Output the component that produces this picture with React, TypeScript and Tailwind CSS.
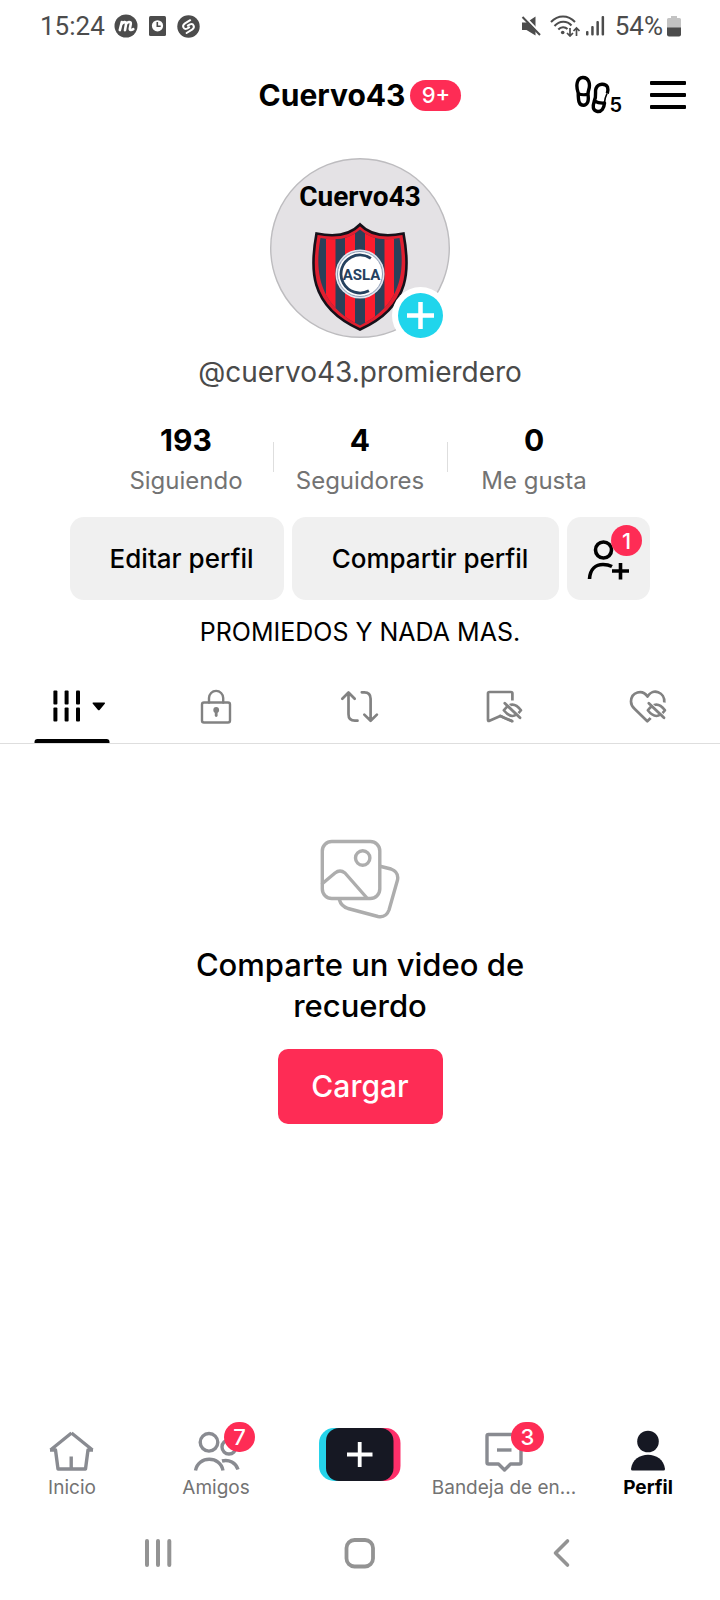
import type { ReactNode } from "react";

const inter = "font-['Inter','Liberation_Sans',sans-serif]";
const roboto = "font-['Roboto','Liberation_Sans',sans-serif]";

function StatusBar() {
  return (
    <div className={`flex h-[52px] items-center justify-between pl-10 pr-[39px] text-[#4c4c4c] ${roboto}`}>
      <div className="flex items-center">
        <span className="text-[26px] leading-none">15:24</span>
        <svg className="ml-[9px]" width="24" height="24" viewBox="0 0 24 24" aria-hidden="true">
          <circle cx="12" cy="12" r="11.5" fill="#4c4c4c" />
          <path d="M5 16.5 7 8.5M6.8 10.5C8 8.2 11.6 7.6 11.3 10.2L10.2 16.5M11.2 10.5C12.6 8.2 16.2 7.4 16 10.2L15 15.2C14.8 16.6 16.5 16.8 18.5 15.6" transform="translate(.8 -.4)" fill="none" stroke="#fff" strokeWidth="2.6" strokeLinecap="round" />
        </svg>
        <svg className="ml-[11px]" width="17" height="20" viewBox="0 0 17 20" aria-hidden="true">
          <rect width="17" height="20" rx="1.5" fill="#4c4c4c" />
          <circle cx="8.5" cy="9.8" r="5.6" fill="#fff" />
          <path d="M8.3 6v4.2h3.4" fill="none" stroke="#4c4c4c" strokeWidth="1.6" />
        </svg>
        <svg className="ml-[11px]" width="23" height="23" viewBox="0 0 23 23" aria-hidden="true">
          <circle cx="11.5" cy="11.5" r="11.2" fill="#4c4c4c" />
          <path d="M13.2 5.2 8 8.4C4.4 10.8 6.6 15 10 13.6L12.2 12.4M9.6 18 15 14.6C18.6 12.2 16.4 8 13 9.4L10.8 10.6" fill="none" stroke="#fff" strokeWidth="2" strokeLinecap="round" />
        </svg>
      </div>
      <div className="flex items-center">
        <svg width="20" height="20" viewBox="0 0 20 20" aria-hidden="true">
          <path d="M1 6.5h4.5L14.5.5v19L5.5 14H1Z" fill="#4c4c4c" />
          <path d="m3.2 0 17 18" stroke="#fff" strokeWidth="2" />
          <path d="m1.5 1 17.5 18" stroke="#4c4c4c" strokeWidth="2" />
        </svg>
        <svg className="ml-[9px]" width="30" height="22" viewBox="0 0 30 22" fill="none" stroke="#4c4c4c" strokeWidth="2" aria-hidden="true">
          <path d="M1 7C8-.5 18-.5 25 7M4.5 11C9.5 5.3 17 5.3 21.5 10.5M8.3 14.5C11 11.5 15 11.5 17.5 14" />
          <circle cx="12.7" cy="17.5" r="1.8" fill="#4c4c4c" stroke="none" />
          <path d="M20 13v8M17 18l3 3 3-3M26.5 21v-8M23.5 16l3-3 3 3" strokeWidth="1.7" />
        </svg>
        <svg className="ml-[6px]" width="19" height="20" viewBox="0 0 19 20" fill="#4c4c4c" aria-hidden="true">
          <rect x="0" y="15" width="2.5" height="4.5" rx="1" />
          <rect x="5.2" y="10" width="2.5" height="9.5" rx="1" />
          <rect x="10.4" y="5" width="2.5" height="14.5" rx="1" />
          <rect x="15.6" y="0" width="2.5" height="19.5" rx="1" />
        </svg>
        <span className="ml-[10px] text-[26px] leading-none">54%</span>
        <svg className="ml-1" width="14" height="21" viewBox="0 0 14 21" aria-hidden="true">
          <path d="M4 0h6v2h2.5q1.5 0 1.5 1.5V12H0V3.5Q0 2 1.5 2H4Z" fill="#c3c3c3" />
          <path d="M0 11.5h14v7q0 2-2 2H2q-2 0-2-2Z" fill="#4c4c4c" />
        </svg>
      </div>
    </div>
  );
}

function Header() {
  return (
    <header className="relative flex h-[86px] items-center justify-center">
      <div className="flex items-center gap-[5px]">
        <h1 className="text-[30px] leading-none font-bold text-black">Cuervo43</h1>
        <span className="flex h-[31px] w-[51px] items-center justify-center rounded-full bg-[#fe2c55] text-[22px] leading-none font-medium text-white">9+</span>
      </div>
      <div className="absolute right-[34px] flex items-center gap-[28px]">
        <button type="button" aria-label="Visitas al perfil" className="relative flex w-[47px]">
          <svg width="38" height="40" viewBox="0 0 38 40" fill="none" stroke="#000" strokeWidth="3.4" strokeLinejoin="round" aria-hidden="true">
            <path d="M3.2 18C0.5 10 2 2.8 7.8 2.500C13.800 2.300 15.500 9 13.800 14.500Q13 17 13 19.500Q14.500 29.500 8.800 30.300C3.500 30.500 3.300 25 3.200 18Z" />
            <path d="M3.2 18.700Q7.500 20.500 13 19.300" strokeWidth="3" />
            <path d="M19.3 26C22 20 19.500 17 21 13.500C23.500 7.800 30.500 8.500 32.500 12Q33.500 15 32.300 18.500" />
            <path d="M32 18.500Q30 22.500 29.500 27.500" strokeWidth="1.6" />
            <path d="M19.3 26Q24 28.500 29.500 28C29 33.500 26.500 37 22.500 36.500C17.500 35.500 17.500 31.500 19.300 26Z" />
          </svg>
          <span className="absolute right-0 bottom-0 text-[20px] leading-none font-semibold">5</span>
        </button>
        <button type="button" aria-label="Menú" className="flex w-[36px] flex-col gap-2">
          <span className="h-[4px] w-full rounded-[1px] bg-black" />
          <span className="h-[4px] w-full rounded-[1px] bg-black" />
          <span className="h-[4px] w-full rounded-[1px] bg-black" />
        </button>
      </div>
    </header>
  );
}

function Avatar() {
  return (
    <div className="relative mt-5 size-[180px]">
      <svg className="size-full" viewBox="0 0 180 180" role="img" aria-label="Foto de perfil de Cuervo43">
        <defs>
          <clipPath id="shield">
            <path d="M90 71.500Q76 85 50.500 80C45.500 108 45.500 146 90 167.500C134.500 146 134.500 108 129.500 80Q104 85 90 71.500Z" />
          </clipPath>
        </defs>
        <circle cx="90" cy="90" r="89.3" fill="#e4e2e5" stroke="#bdbcbf" strokeWidth="1.4" />
        <text x="90" y="48" textAnchor="middle" fontFamily="Roboto, sans-serif" fontSize="28" fontWeight="700">Cuervo43</text>
        <path d="M90 66.500Q76 81.500 46.500 75.500C40.500 108 37.500 148 90 171.500C142.500 148 139.500 108 133.500 75.500Q104 81.500 90 66.500Z" fill="#e01f30" stroke="#15111a" strokeWidth="2.6" />
        <g clipPath="url(#shield)">
          <rect x="40" y="64" width="100" height="110" fill="#2b4059" />
          <g fill="#fb1c2d">
            <rect x="56" y="64" width="9.5" height="110" />
            <rect x="75" y="64" width="10" height="110" />
            <rect x="95" y="64" width="10" height="110" />
            <rect x="114.5" y="64" width="9.5" height="110" />
          </g>
        </g>
        <circle cx="90" cy="116" r="24.5" fill="#dfe5ef" />
        <circle cx="90" cy="116" r="22.5" fill="#fff" stroke="#8c9bb4" strokeWidth="1" />
        <circle cx="90" cy="116" r="19" fill="none" stroke="#25415f" strokeWidth="2.8" strokeDasharray="80 100" transform="rotate(62 90 116)" />
        <text x="91.5" y="121.5" fill="#25415f" fontFamily="Roboto, sans-serif" fontSize="15" fontWeight="700" textAnchor="middle">ASLA</text>
      </svg>
      <button type="button" aria-label="Agregar foto" className="absolute right-px -bottom-[6px] flex size-[57px] items-center justify-center rounded-full bg-white">
        <svg width="45" height="45" viewBox="0 0 45 45" aria-hidden="true">
          <circle cx="22.5" cy="22.5" r="22.5" fill="#20d5ec" />
          <path d="M9 22.5h27M22.5 9v27" stroke="#fff" strokeWidth="4.5" />
        </svg>
      </button>
    </div>
  );
}

const stats = [
  { value: "193", label: "Siguiendo" },
  { value: "4", label: "Seguidores" },
  { value: "0", label: "Me gusta" },
];

function Stats() {
  return (
    <dl className="mt-8 flex items-center justify-center">
      {stats.map((s, i) => (
        <div key={s.label} className="flex items-center">
          {i > 0 && <span className="mb-2 h-[30px] w-px bg-[#dedede]" />}
          <div className="flex w-[173px] flex-col-reverse items-center gap-[5px]">
            <dt className="text-[24px] leading-9 text-[#737373]">{s.label}</dt>
            <dd className="text-[30px] leading-9 font-bold text-black">{s.value}</dd>
          </div>
        </div>
      ))}
    </dl>
  );
}

function Actions() {
  const base = "h-[83px] flex-auto rounded-[14px] bg-[#f0f0f0] pl-[9px] text-[26px] font-medium text-black";
  return (
    <div className="mt-[18px] flex w-full gap-2 px-[70px]">
      <button type="button" className={base}>Editar perfil</button>
      <button type="button" className={base}>Compartir perfil</button>
      <button type="button" aria-label="Agregar amigos" className="relative h-[83px] w-[83px] shrink-0 rounded-[14px] bg-[#f0f0f0]">
        <svg className="ml-5 mt-1" width="44" height="42" viewBox="0 0 44 42" fill="none" stroke="#000" strokeWidth="3.6" aria-hidden="true">
          <circle cx="16.5" cy="10" r="8" />
          <path d="M2.5 39C3 29 9 24.500 16 24.500Q21 24.500 25 26.500" />
          <path d="M25 31h17M33.500 23v16.500" />
        </svg>
        <span className="absolute top-2 right-2 flex size-[31px] items-center justify-center rounded-full bg-[#fe2c55] text-[22px] leading-none font-medium text-white">1</span>
      </button>
    </div>
  );
}

function HiddenEye() {
  return (
    <>
      <ellipse cx="28.4" cy="24.3" rx="8.6" ry="5.6" fill="#fff" stroke="#fff" strokeWidth="6" />
      <path d="M19.800 24.300Q28.400 13 37 24.300Q28.400 35.600 19.800 24.300Z" strokeWidth="2.600" />
      <path d="M23.500 17.500 34.500 28" stroke="#fff" strokeWidth="1.200" />
      <path d="M20.800 17.200 36 31.800" strokeWidth="2.800" />
    </>
  );
}

function TabIcon({ children }: { children: ReactNode }) {
  return (
    <svg width="40" height="40" viewBox="0 0 40 40" fill="none" stroke="#828282" strokeWidth="2.7" strokeLinecap="round" strokeLinejoin="round" aria-hidden="true">
      {children}
    </svg>
  );
}

function Tabs() {
  const tab = "flex h-full w-1/5 items-center justify-center";
  return (
    <div role="tablist" className="mt-[18px] flex h-[76px] w-full border-b border-[#dedede]">
      <button type="button" role="tab" aria-selected="true" aria-label="Videos" className={`${tab} relative pl-[14px]`}>
        <svg width="53" height="32" viewBox="0 0 53 32" aria-hidden="true">
          {[0.4, 11.6, 23].map((x) => (
            <g key={x}>
              <rect x={x} y="0.5" width="4" height="14" rx="1" />
              <rect x={x} y="17.5" width="4" height="14" rx="1" />
            </g>
          ))}
          <path d="M40 12.500h11.500q1 .3.300 1.200l-5 6q-1 1-2 0l-5-6q-.8-.9.200-1.200Z" />
        </svg>
        <span className="absolute bottom-0 left-1/2 h-1 w-[75px] -translate-x-1/2 rounded-t-[3px] bg-black" />
      </button>
      <button type="button" role="tab" aria-selected="false" aria-label="Privados" className={tab}>
        <TabIcon>
          <rect x="6" y="16.5" width="28" height="20" rx="2" strokeWidth="2.4" />
          <path d="M13 16.500V12a7.100 7.100 0 0 1 14.200 0v4.500" strokeWidth="2.4" />
          <circle cx="20.2" cy="24" r="2.9" fill="#828282" stroke="none" />
          <path d="M20.200 25v4.500" strokeWidth="2.8" />
        </TabIcon>
      </button>
      <button type="button" role="tab" aria-selected="false" aria-label="Republicaciones" className={tab}>
        <TabIcon>
          <path d="M17.500 34.700h-2.500q-6.500 0-6.500-6.500V6.500M2.300 12.700l6.200-6.200 6.200 6.200M21.800 6.300h2.500q6.300 0 6.300 6.500v22M24.300 28.600l6.300 6.200 6.300-6.200" />
        </TabIcon>
      </button>
      <button type="button" role="tab" aria-selected="false" aria-label="Favoritos" className={tab}>
        <TabIcon>
          <path d="M28.400 14.500V7.500q0-1.500-1.500-1.500H5.500Q4 6 4 7.500V34q0 1.500 1.500.7L16.300 30l12 5.200" strokeLinecap="butt" />
          <HiddenEye />
          <path d="M16.300 30l12 5.200" />
        </TabIcon>
      </button>
      <button type="button" role="tab" aria-selected="false" aria-label="Me gusta" className={tab}>
        <TabIcon>
          <path d="M36.300 16.500C37.300 6 24.500 1.500 19.500 10.500C14.500 3 3.300 5.500 3 15.500Q3 19.500 6.500 22.800L19.300 35.300L22.700 32" strokeLinecap="butt" />
          <HiddenEye />
        </TabIcon>
      </button>
    </div>
  );
}

function EmptyState() {
  return (
    <section className="mt-[94px] flex flex-col items-center">
      <svg width="80" height="82" viewBox="0 0 80 82" fill="none" stroke="#adadad" strokeWidth="3.4" strokeLinecap="round" strokeLinejoin="round" aria-hidden="true">
        <rect x="2.3" y="3.5" width="57.5" height="57" rx="9.5" />
        <circle cx="42.7" cy="20" r="7.2" />
        <path d="M2.500 45.500 15 35q5-4 10 0L46.500 59.500" />
        <path d="M61 28.500l10 2.500q8 3 6.500 11l-8.500 30q-3 8-11 6.500L28 70.500q-7-2.500-8.500-8.500" />
      </svg>
      <h2 className="mt-6 max-w-[400px] text-center text-[31px] leading-[41px] font-medium text-black">Comparte un video de recuerdo</h2>
      <button type="button" className="mt-[23px] h-[75px] w-[165px] rounded-[10px] bg-[#fe2c55] text-[30px] font-medium text-white">Cargar</button>
    </section>
  );
}

function NavItem({ label, active, badge, wide, children }: { label: string; active?: boolean; badge?: string; wide?: boolean; children: ReactNode }) {
  return (
    <a href="#" aria-current={active ? "page" : undefined} className="flex min-w-0 flex-1 flex-col items-center">
      <span className="relative">
        <svg width="48" height="48" viewBox="0 0 48 48" fill="none" stroke="#898b91" strokeWidth="3.4" strokeLinejoin="round" aria-hidden="true">
          {children}
        </svg>
        {badge && (
          <span className={`absolute -top-1 flex h-[30px] items-center justify-center rounded-full bg-[#fe2c55] text-[22px] leading-none font-medium text-white ${wide ? "left-[31px] w-[33px]" : "left-8 w-[31px]"}`}>{badge}</span>
        )}
      </span>
      <span className={`mt-0.5 text-[19px] leading-6 whitespace-nowrap ${active ? "font-bold text-black" : "text-[#737373]"}`}>{label}</span>
    </a>
  );
}

function BottomNav() {
  return (
    <nav className="mt-auto flex h-[97px] items-start">
      <NavItem label="Inicio">
        <path d="M23.500 7 44.500 24M23.500 7 2.500 24M2 24H7.500L10 43H37.500L40 24H45M23.200 43V30.500" />
      </NavItem>
      <NavItem label="Amigos" badge="7">
        <circle cx="17" cy="16.3" r="8.8" />
        <path d="M3.500 44.500C6 29.500 28.500 29.500 31 44.500" />
        <circle cx="37" cy="21" r="7" />
        <path d="M30 35C37 33 44 37 46 43.500" />
      </NavItem>
      <button type="button" aria-label="Crear" className="flex flex-1 justify-center pt-[2px]">
        <svg width="82" height="54" viewBox="0 0 82 54" aria-hidden="true">
          <rect x="0" y="0" width="45" height="53" rx="15" fill="#25d3ea" />
          <rect x="37" y="0" width="44.5" height="53" rx="15" fill="#fd2f6a" />
          <rect x="7" y="0" width="67.5" height="53" rx="13" fill="#161823" />
          <path d="M28 26.500h25.500M40.700 14v25" stroke="#fff" strokeWidth="3.8" />
        </svg>
      </button>
      <NavItem label="Bandeja de en..." badge="3" wide>
        <path d="M8.500 8.500H39.500Q41 8.500 41 10V36.500Q41 38 39.500 38H30.500L24.500 44 18.500 38H8.500Q7 38 7 36.500V10Q7 8.500 8.500 8.500Z" />
        <path d="M17 24h14.500" />
      </NavItem>
      <NavItem label="Perfil" active>
        <g fill="#161823" stroke="none">
          <circle cx="24" cy="15.5" r="10.8" />
          <path d="M7 43C9 24 39 24 41 43Q41 44.500 39.500 44.500H8.500Q7 44.500 7 43Z" />
        </g>
      </NavItem>
    </nav>
  );
}

function SystemNav() {
  const item = "flex flex-1 items-center justify-center";
  return (
    <div className="flex h-[77px] px-[57px] pb-[17px]">
      <button type="button" aria-label="Recientes" className={item}>
        <svg width="32" height="32" viewBox="0 0 32 32" stroke="#939393" strokeWidth="4" strokeLinecap="round" aria-hidden="true">
          <path d="M5 4v24M16 4v24M27.300 4v24" />
        </svg>
      </button>
      <button type="button" aria-label="Inicio del sistema" className={item}>
        <svg width="32" height="32" viewBox="0 0 32 32" fill="none" stroke="#939393" strokeWidth="3.8" aria-hidden="true">
          <rect x="2.5" y="3" width="26.5" height="26.5" rx="8" />
        </svg>
      </button>
      <button type="button" aria-label="Atrás" className={item}>
        <svg width="32" height="32" viewBox="0 0 32 32" fill="none" stroke="#939393" strokeWidth="3.6" strokeLinecap="round" aria-hidden="true">
          <path d="M21.500 4 9.500 16l12 12" strokeLinejoin="round" />
        </svg>
      </button>
    </div>
  );
}

export default function App() {
  return (
    <div className={`flex min-h-screen flex-col bg-white ${inter}`}>
      <StatusBar />
      <Header />
      <main className="flex flex-col items-center">
        <Avatar />
        <p className="mt-4 text-[28px] leading-9 text-[#4a4a4a]">@cuervo43.promierdero</p>
        <Stats />
        <Actions />
        <p className="mt-[14px] text-[25px] leading-9 text-black">PROMIEDOS Y NADA MAS.</p>
        <Tabs />
        <EmptyState />
      </main>
      <BottomNav />
      <SystemNav />
    </div>
  );
}
